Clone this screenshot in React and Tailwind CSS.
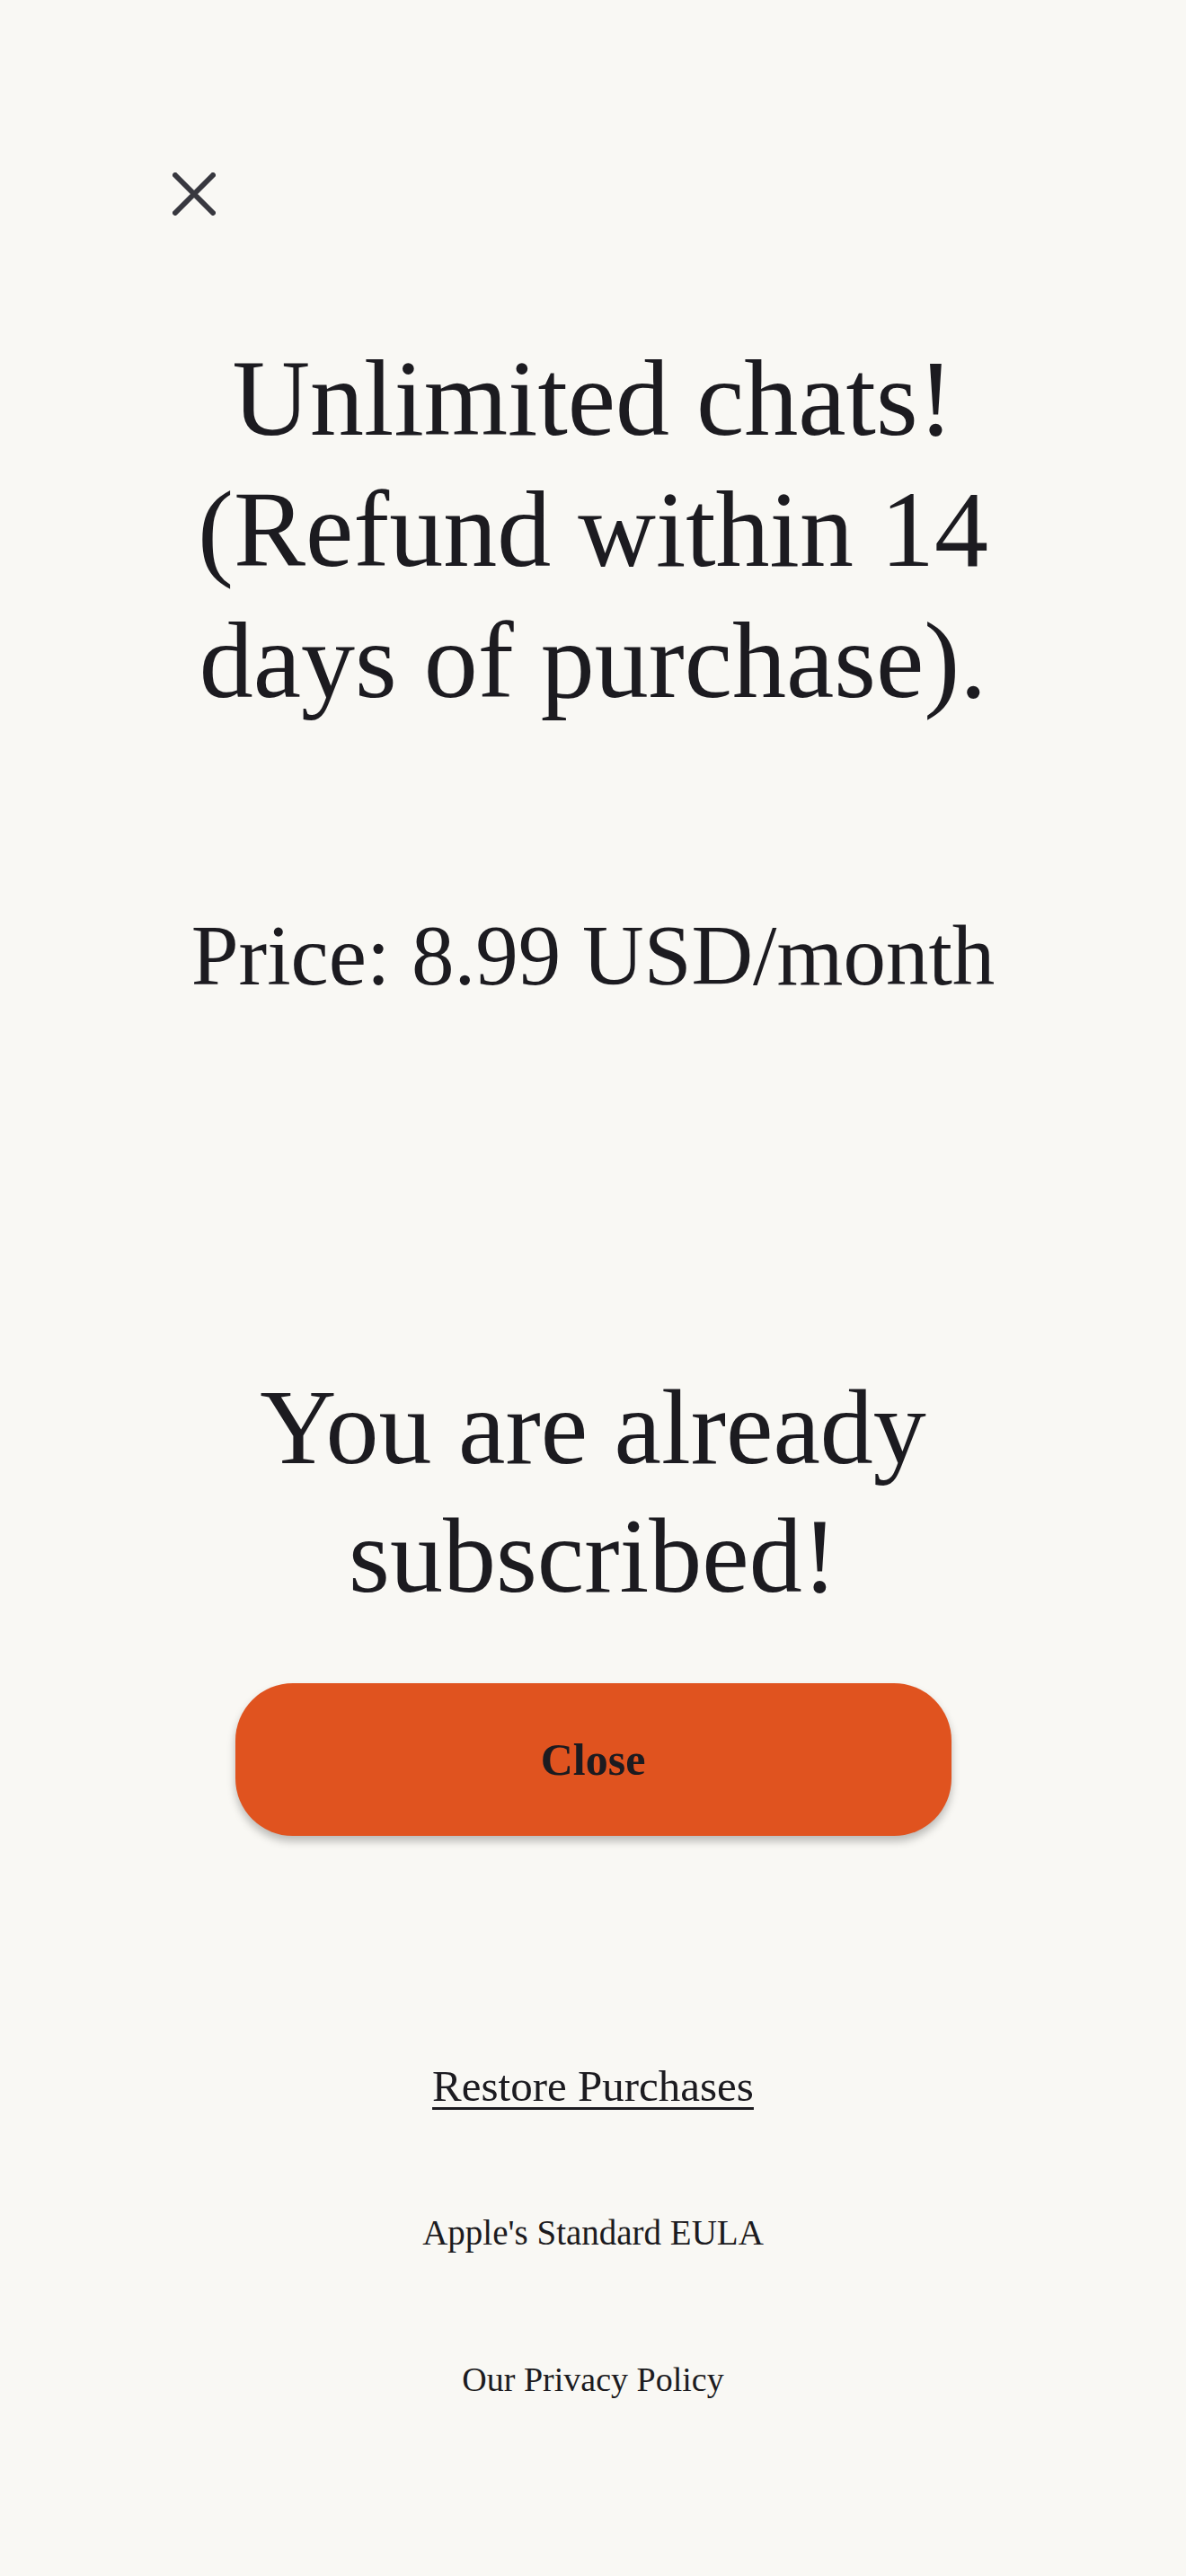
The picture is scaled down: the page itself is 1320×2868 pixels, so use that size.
import React from 'react';

const serif = { fontFamily: '"Liberation Serif", "DejaVu Serif", serif' };

const CloseIcon = () => (
  <svg width="48" height="48" viewBox="0 0 48 48" fill="none">
    <path d="M3 3L45 45M45 3L3 45" stroke="#38383f" strokeWidth="6" strokeLinecap="round" />
  </svg>
);

export default function App() {
  return (
    <div
      className="min-h-screen w-full bg-[#f9f8f4] text-[#1c1b20] flex flex-col items-center pb-[200px]"
      style={serif}
    >
      {/* Top bar */}
      <div className="w-full pl-[192px] pt-[192px]">
        <button className="w-[48px] h-[48px] flex items-center justify-center">
          <CloseIcon />
        </button>
      </div>

      {/* Offer */}
      <h1 className="mt-[131px] w-[980px] text-center text-[120px] leading-[146px] font-normal">
        Unlimited chats! (Refund within 14 days of purchase).
      </h1>

      <p className="mt-[200px] text-center text-[95px] leading-[110px]">
        Price: 8.99 USD/month
      </p>

      {/* Status */}
      <h2 className="mt-[399px] w-[960px] text-center text-[118px] leading-[143px] font-normal">
        You are already subscribed!
      </h2>

      <button className="mt-[70px] w-[797px] h-[170px] rounded-[64px] bg-[#e0531f] shadow-[0_6px_10px_rgba(0,0,0,0.25)] flex items-center justify-center text-[50px] font-bold text-[#1c1b20]">
        Close
      </button>

      {/* Links */}
      <div className="mt-[249px] flex flex-col items-center gap-[103px]">
        <a className="text-[49px] leading-[60px] underline decoration-[3px] underline-offset-[7px]">
          Restore Purchases
        </a>
        <a className="text-[39px] leading-[60px]">Apple's Standard EULA</a>
        <a className="text-[38px] leading-[60px]">Our Privacy Policy</a>
      </div>
    </div>
  );
}
